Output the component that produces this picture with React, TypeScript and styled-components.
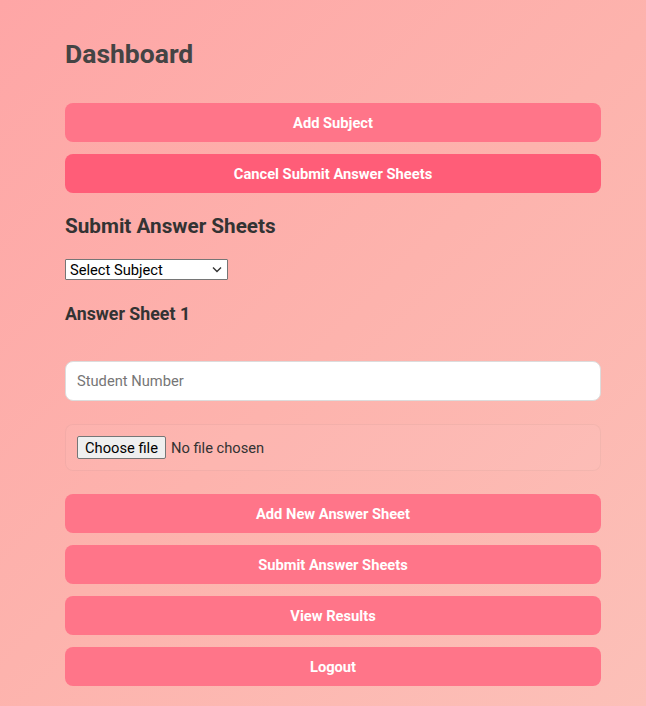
import * as React from "react";
import styled, { createGlobalStyle } from "styled-components";

const GlobalStyle = createGlobalStyle`
  * {
    box-sizing: border-box;
  }

  body {
    margin: 0;
    font-family: Roboto, "Liberation Sans", sans-serif;
  }
`;

const Page = styled.div`
  min-height: 706px;
  background: linear-gradient(135deg, #fea6a6 0%, #fdb3ad 50%, #fcc0b8 100%);
  padding: 36px 45px 20px 65px;
`;

const Container = styled.div`
  width: 536px;
  display: flex;
  flex-direction: column;
`;

const Title = styled.h1`
  font-size: 26.5px;
  font-weight: 700;
  color: #444;
  margin: 0 0 31px;
  line-height: 36px;
`;

const ButtonStack = styled.div`
  display: flex;
  flex-direction: column;
  gap: 12px;
`;

const ActionButton = styled.button<{ $danger?: boolean }>`
  width: 100%;
  height: 39px;
  border: none;
  border-radius: 8px;
  background-color: ${(p) => (p.$danger ? "#ff5d78" : "#ff7589")};
  color: #fff;
  font-family: Roboto, "Liberation Sans", sans-serif;
  font-size: 14.7px;
  font-weight: 700;
  cursor: pointer;
`;

const SectionTitle = styled.h2`
  font-size: 20.7px;
  font-weight: 700;
  color: #333;
  margin: 21px 0 21px;
  line-height: 24px;
`;

const SelectWrap = styled.div`
  position: relative;
  width: 163px;
  height: 21px;
`;

const SubjectSelect = styled.select`
  appearance: none;
  width: 100%;
  height: 100%;
  font-family: Roboto, "Liberation Sans", sans-serif;
  font-size: 14.7px;
  line-height: 19px;
  color: #000;
  background: #fff;
  border: 1px solid #767676;
  border-radius: 1px;
  padding: 1px 20px 0 4px;
`;

const Chevron = styled.svg`
  position: absolute;
  right: 6px;
  top: 7px;
  pointer-events: none;
`;

const SheetTitle = styled.h3`
  font-size: 17.8px;
  font-weight: 700;
  color: #333;
  margin: 23px 0 36px;
  line-height: 22px;
`;

const StudentInput = styled.input`
  width: 100%;
  height: 40px;
  padding: 0 11px;
  font-family: Roboto, "Liberation Sans", sans-serif;
  font-size: 14.7px;
  border: 1px solid #dcdcdc;
  border-radius: 8px;
  background: #fff;
  outline: none;

  &::placeholder {
    color: #767676;
  }
`;

const FileBox = styled.label`
  margin: 23px 0 23px;
  height: 47px;
  padding: 0 11px;
  display: flex;
  align-items: center;
  gap: 5px;
  border: 1px solid rgba(0, 0, 0, 0.04);
  border-radius: 8px;
  background: rgba(255, 255, 255, 0.04);

  input {
    display: none;
  }
`;

const FileButton = styled.span`
  display: inline-flex;
  align-items: center;
  height: 23px;
  padding: 0 7px;
  font-size: 14.7px;
  color: #000;
  border: 1px solid #767676;
  border-radius: 2px;
  background: #efefef;
`;

const FileName = styled.span`
  font-size: 14.7px;
  color: #333;
`;

const App = () => {
  return (
    <Page>
      <GlobalStyle />
      <Container>
        <Title>Dashboard</Title>
        <ButtonStack>
          <ActionButton>Add Subject</ActionButton>
          <ActionButton $danger>Cancel Submit Answer Sheets</ActionButton>
        </ButtonStack>

        <SectionTitle>Submit Answer Sheets</SectionTitle>
        <SelectWrap>
          <SubjectSelect defaultValue="">
            <option value="">Select Subject</option>
          </SubjectSelect>
          <Chevron width="10" height="7" viewBox="0 0 10 7">
            <path d="M1 1.5 L5 5.5 L9 1.5" fill="none" stroke="#333" strokeWidth="1.4" />
          </Chevron>
        </SelectWrap>

        <SheetTitle>Answer Sheet 1</SheetTitle>
        <StudentInput type="text" placeholder="Student Number" />
        <FileBox>
          <input type="file" />
          <FileButton>Choose file</FileButton>
          <FileName>No file chosen</FileName>
        </FileBox>

        <ButtonStack>
          <ActionButton>Add New Answer Sheet</ActionButton>
          <ActionButton>Submit Answer Sheets</ActionButton>
          <ActionButton>View Results</ActionButton>
          <ActionButton>Logout</ActionButton>
        </ButtonStack>
      </Container>
    </Page>
  );
};

export default App;
